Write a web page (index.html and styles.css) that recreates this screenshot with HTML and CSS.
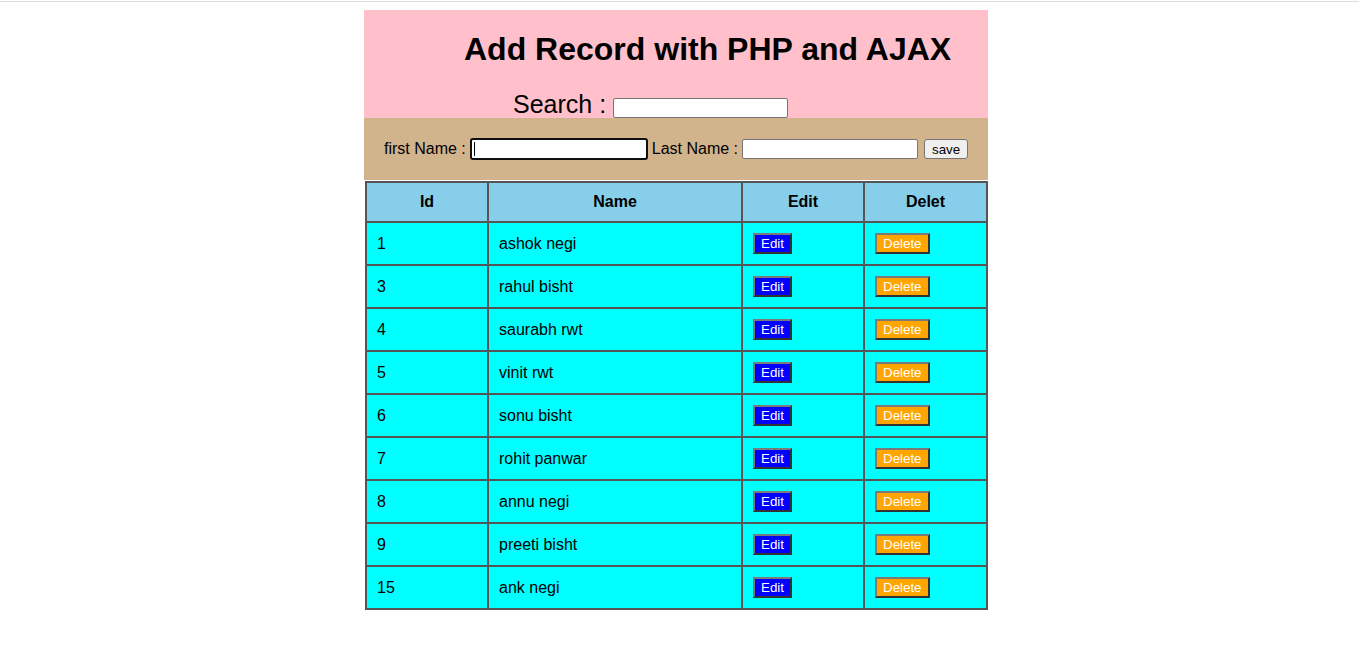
FILE: index.html
```html
<!DOCTYPE html>
<html>
<head>
<meta charset="utf-8">
<title>Add Record with PHP and AJAX</title>
<link rel="stylesheet" href="styles.css">
</head>
<body>
<div class="topline"></div>
<div class="wrap">
  <div class="header">
    <h1 class="title">Add Record with PHP and AJAX</h1>
    <div class="search">
      <span class="search-label">Search :</span>
      <input class="search-input" type="text">
    </div>
  </div>
  <div class="form">
    <span class="lbl lbl-first">first Name :</span>
    <input class="inp inp-focus" type="text">
    <span class="lbl lbl-last">Last Name :</span>
    <input class="inp inp-last" type="text">
    <button class="save" type="button">save</button>
  </div>
  <table class="records">
    <colgroup>
      <col class="c-id"><col class="c-name"><col class="c-edit"><col class="c-del">
    </colgroup>
    <thead>
      <tr><th>Id</th><th>Name</th><th>Edit</th><th>Delet</th></tr>
    </thead>
    <tbody>
      <tr><td>1</td><td>ashok negi</td><td><button class="btn-edit" type="button">Edit</button></td><td><button class="btn-del" type="button">Delete</button></td></tr>
      <tr><td>3</td><td>rahul bisht</td><td><button class="btn-edit" type="button">Edit</button></td><td><button class="btn-del" type="button">Delete</button></td></tr>
      <tr><td>4</td><td>saurabh rwt</td><td><button class="btn-edit" type="button">Edit</button></td><td><button class="btn-del" type="button">Delete</button></td></tr>
      <tr><td>5</td><td>vinit rwt</td><td><button class="btn-edit" type="button">Edit</button></td><td><button class="btn-del" type="button">Delete</button></td></tr>
      <tr><td>6</td><td>sonu bisht</td><td><button class="btn-edit" type="button">Edit</button></td><td><button class="btn-del" type="button">Delete</button></td></tr>
      <tr><td>7</td><td>rohit panwar</td><td><button class="btn-edit" type="button">Edit</button></td><td><button class="btn-del" type="button">Delete</button></td></tr>
      <tr><td>8</td><td>annu negi</td><td><button class="btn-edit" type="button">Edit</button></td><td><button class="btn-del" type="button">Delete</button></td></tr>
      <tr><td>9</td><td>preeti bisht</td><td><button class="btn-edit" type="button">Edit</button></td><td><button class="btn-del" type="button">Delete</button></td></tr>
      <tr><td>15</td><td>ank negi</td><td><button class="btn-edit" type="button">Edit</button></td><td><button class="btn-del" type="button">Delete</button></td></tr>
    </tbody>
  </table>
</div>
</body>
</html>
```
FILE: styles.css
```css
html, body {
  margin: 0;
  padding: 0;
  background: #fff;
}
body {
  font-family: "Liberation Sans", Arial, sans-serif;
  color: #000;
}
.topline {
  margin-top: 1px;
  height: 1px;
  background: #dedede;
}
.wrap {
  width: 624px;
  margin: 8px 0 0 364px;
}
.header {
  background: #ffc0cb;
  height: 108px;
  box-sizing: border-box;
  padding-top: 21px;
  display: flex;
  flex-direction: column;
}
.title {
  margin: 0;
  padding-left: 100px;
  font-size: 32px;
  font-weight: bold;
  line-height: 37px;
}
.search {
  margin-top: auto;
  padding-left: 149px;
  display: flex;
  align-items: flex-end;
}
.search-label {
  font-size: 25px;
  line-height: 27px;
  margin-right: 7px;
}
.search-input {
  box-sizing: border-box;
  width: 175px;
  height: 20px;
  margin: 0;
  border: 1px solid #767676;
  border-radius: 2px;
  background: #fff;
  padding: 1px 2px;
}
.form {
  background: #d2b48c;
  height: 62px;
  box-sizing: border-box;
  padding-left: 20px;
  display: flex;
  align-items: center;
}
.lbl {
  font-size: 16px;
  line-height: 18px;
  color: #000;
}
.lbl-first {
  margin-right: 4px;
}
.lbl-last {
  margin-left: 4px;
  margin-right: 4px;
}
.inp {
  box-sizing: border-box;
  height: 20px;
  margin: 0;
  border: 1px solid #767676;
  border-radius: 2px;
  background: #fff;
  padding: 1px 2px;
}
.inp-focus {
  width: 178px;
  height: 22px;
  border: 2px solid #101010;
  border-radius: 3px;
  outline: none;
  background: #fff linear-gradient(#000, #000) no-repeat 2px 2px / 1px 14px;
  background-origin: padding-box;
}
.inp-last {
  width: 176px;
}
.save {
  box-sizing: border-box;
  width: 44px;
  height: 20px;
  margin-left: 6px;
  padding: 0;
  font-family: "Liberation Sans", Arial, sans-serif;
  font-size: 13.33px;
  color: #000;
  background: #efefef;
  border: 1px solid #767676;
  border-radius: 3px;
}
.records {
  margin: 1px 0 0 1px;
  width: 623px;
  table-layout: fixed;
  border-collapse: separate;
  border-spacing: 0;
  border: 1px solid #555;
  font-size: 16px;
}
.c-id { width: 122px; }
.c-name { width: 254px; }
.c-edit { width: 122px; }
.c-del { width: 123px; }
.records th,
.records td {
  border: 1px solid #555;
  padding: 10px;
}
.records th {
  background: #87ceeb;
  font-weight: bold;
  text-align: center;
  line-height: 18px;
}
.records td {
  background: #00ffff;
  text-align: left;
}
.btn-edit,
.btn-del {
  font-family: "Liberation Sans", Arial, sans-serif;
  font-size: 13.33px;
  color: #fff;
  padding: 1px 6px;
  margin: 0;
  border-width: 2px;
  border-style: solid;
  border-color: #7a7a7a #333 #333 #7a7a7a;
  height: 21px;
  box-sizing: border-box;
  vertical-align: baseline;
}
.btn-edit {
  background: #0000ff;
}
.btn-del {
  background: #ffa500;
}
```
